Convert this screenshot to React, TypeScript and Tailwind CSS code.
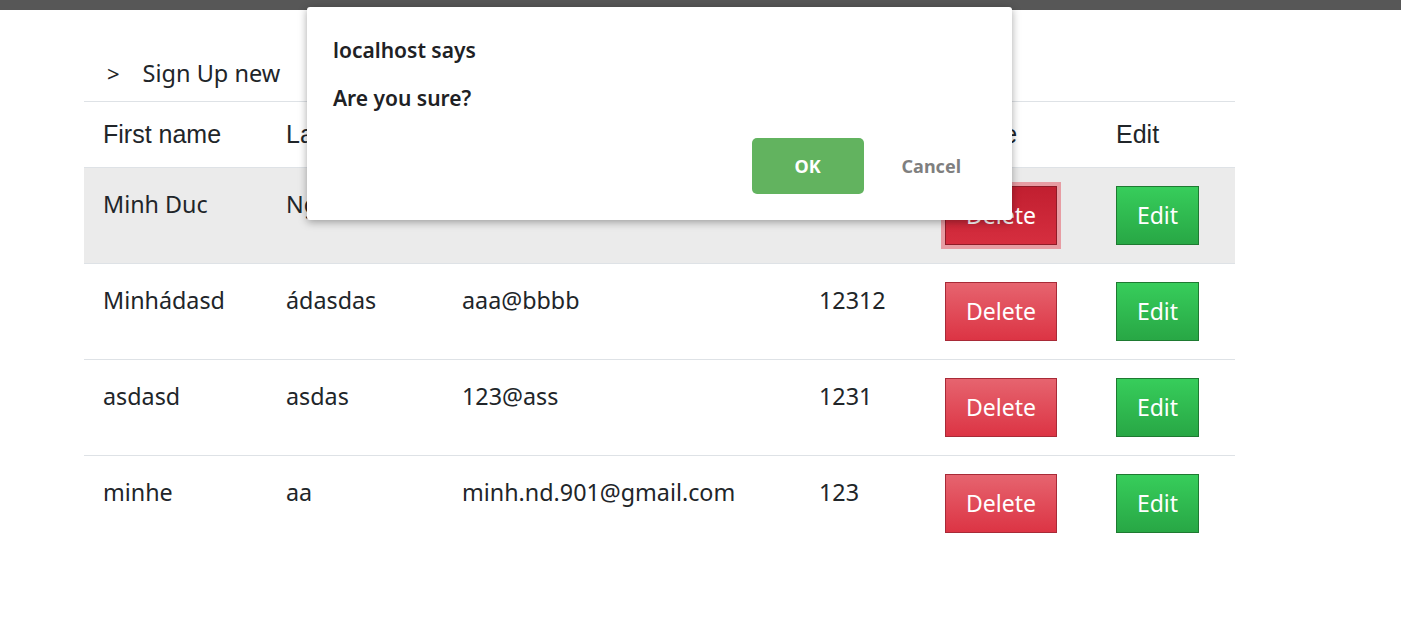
import React from "react";

const rows = [
  { first: "Minh Duc", last: "Nguyen", email: "minhduc@gmail.com", phone: "0123", active: true },
  { first: "Minhádasd", last: "ádasdas", email: "aaa@bbbb", phone: "12312" },
  { first: "asdasd", last: "asdas", email: "123@ass", phone: "1231" },
  { first: "minhe", last: "aa", email: "minh.nd.901@gmail.com", phone: "123" },
];

const seg = { fontFamily: '"Noto Sans", "Open Sans", sans-serif' };
const arial = { fontFamily: '"Liberation Sans", Arial, sans-serif' };

export default function App() {
  return (
    <div className="relative w-[1401px] h-[622px] bg-white overflow-hidden text-[#212529]" style={seg}>
      <div className="h-[10px] bg-[#575757]" />
      <div className="ml-[84px] w-[1151px]">
        <div className="h-[92px] border-b border-[#dee2e6] flex items-end pb-[12px]">
          <span className="ml-[23px] text-[22px] leading-[32px]">&gt;</span>
          <span className="ml-[23px] text-[23.5px] leading-[32px]">Sign Up new</span>
        </div>
        <table className="w-[1151px] table-fixed border-collapse">
          <colgroup>
            <col className="w-[183px]" />
            <col className="w-[176px]" />
            <col className="w-[357px]" />
            <col className="w-[126px]" />
            <col className="w-[171px]" />
            <col className="w-[138px]" />
          </colgroup>
          <thead>
            <tr className="h-[65px] border-b border-[#dee2e6]">
              {["First name", "Last name", "Email", "Phone", "Delete", "Edit"].map((h) => (
                <th key={h} className="text-left font-normal text-[25px] pl-[19px] align-middle" style={arial}>
                  {h}
                </th>
              ))}
            </tr>
          </thead>
          <tbody>
            {rows.map((r, i) => (
              <tr
                key={i}
                className={`h-[96px] ${i < rows.length - 1 ? "border-b border-[#dee2e6]" : ""} ${
                  r.active ? "bg-[#ebebeb]" : ""
                }`}
              >
                <td className="pl-[19px] align-top pt-[19px] text-[23.3px] leading-[34px] whitespace-nowrap">{r.first}</td>
                <td className="pl-[19px] align-top pt-[19px] text-[23.3px] leading-[34px] whitespace-nowrap">{r.last}</td>
                <td className="pl-[19px] align-top pt-[19px] text-[23.3px] leading-[34px] whitespace-nowrap">{r.email}</td>
                <td className="pl-[19px] align-top pt-[19px] text-[23.3px] leading-[34px] whitespace-nowrap">{r.phone}</td>
                <td className="pl-[19px] align-top pt-[18px]">
                  <button
                    className={`w-[112px] h-[59px] border text-white text-[23px] ${
                      r.active
                        ? "bg-[linear-gradient(#c11f30,#d62e3f)] border-[#8f1b27] ring-4 ring-[#e79ca3]"
                        : "bg-[linear-gradient(#e6646f,#dc3444)] border-[#a82a37]"
                    }`}
                  >
                    Delete
                  </button>
                </td>
                <td className="pl-[19px] align-top pt-[18px]">
                  <button className="w-[83px] h-[59px] border border-[#1e7a31] bg-[linear-gradient(#37cd5b,#28a745)] text-white text-[23px]">
                    Edit
                  </button>
                </td>
              </tr>
            ))}
          </tbody>
        </table>
      </div>

      <div className="absolute left-[307px] top-[7px] w-[705px] h-[213px] bg-white rounded-[3px] shadow-[0_2px_8px_rgba(0,0,0,0.35)]">
        <div className="pl-[26px] pt-[28px] text-[21px] font-semibold leading-[30px] text-[#202124]">localhost says</div>
        <div className="pl-[26px] pt-[18px] text-[21px] font-semibold leading-[30px] text-[#202124]">Are you sure?</div>
        <div className="flex justify-end items-center mt-[25px] pr-[51px]">
          <button className="w-[112px] h-[56px] rounded-[5px] bg-[#62b35f] text-white font-bold text-[18px]">OK</button>
          <button className="ml-[38px] text-[#7f7f7f] font-bold text-[18px]">Cancel</button>
        </div>
      </div>
    </div>
  );
}
